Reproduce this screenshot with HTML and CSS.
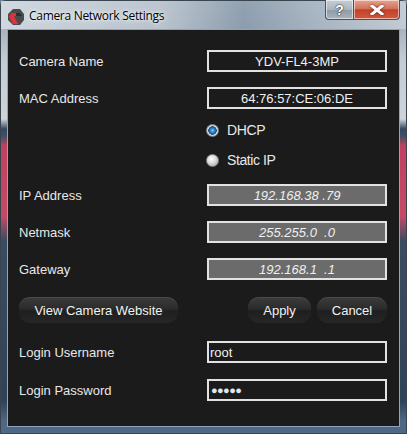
FILE: index.html
```html
<!DOCTYPE html>
<html>
<head>
<meta charset="utf-8">
<link rel="stylesheet" href="styles.css">
</head>
<body>
<div class="window">
  <div class="titlebar">
    <svg class="logo" width="18" height="18" viewBox="0 0 18 18">
      <polygon points="6,1 13,1 17,6 17,12 13,17 6,17 1,12 1,6" fill="#4a4a4a"/>
      <polygon points="4,5 9,5 9,8 7,8 11,16 6,16 2,9" fill="#e0303a"/>
      <polygon points="9,5 13,5 15,8 9,8" fill="#2e2e2e"/>
    </svg>
    <span class="title">Camera Network Settings</span>
    <div class="caption">
      <div class="cap help">?</div>
      <div class="cap close">
        <svg width="14" height="10" viewBox="0 0 14 10"><path d="M2 1 L12 9 M12 1 L2 9" stroke="#fff" stroke-width="3" stroke-linecap="square"/></svg>
      </div>
    </div>
  </div>
  <div class="client">
    <div class="row r-name"><span class="label">Camera Name</span><div class="box">YDV-FL4-3MP</div></div>
    <div class="row r-mac"><span class="label">MAC Address</span><div class="box">64:76:57:CE:06:DE</div></div>
    <div class="row r-dhcp"><span class="radio on"></span><span class="rlabel">DHCP</span></div>
    <div class="row r-static"><span class="radio"></span><span class="rlabel">Static IP</span></div>
    <div class="row r-ip"><span class="label">IP Address</span><div class="box gray">192.168.38 .79</div></div>
    <div class="row r-mask"><span class="label">Netmask</span><div class="box gray">255.255.0 &nbsp;.0</div></div>
    <div class="row r-gw"><span class="label">Gateway</span><div class="box gray">192.168.1 &nbsp;.1</div></div>
    <div class="row r-btns">
      <div class="btn web">View Camera Website</div>
      <div class="spacer"></div>
      <div class="btn apply">Apply</div>
      <div class="btn cancel">Cancel</div>
    </div>
    <div class="row r-user"><span class="label">Login Username</span><div class="box left">root</div></div>
    <div class="row r-pass"><span class="label">Login Password</span><div class="box left dots">●●●●●</div></div>
  </div>
</div>
</body>
</html>
```
FILE: styles.css
```css
* { box-sizing: border-box; }
html, body { margin: 0; padding: 0; }
body { width: 407px; height: 434px; overflow: hidden; background: #6d7f91; }
.window {
  width: 407px; height: 434px;
  border: 1px solid #3b4550;
  border-radius: 6px 6px 0 0;
  background: linear-gradient(180deg, #b9c3cc 0px, #a8b4bf 28px, #c4ccd3 60px, #cdd4da 118px, #33495f 128px, #3f5064 135px, #c0415f 145px, #c44a66 215px, #3a4c62 240px, #2f4358 400px, #4f6885 420px, #4f6885 434px);
  display: flex; flex-direction: column;
  font-family: "Liberation Sans", Arial, sans-serif;
}
.titlebar {
  height: 28px; flex: none;
  display: flex; align-items: flex-start;
  position: relative;
  background: linear-gradient(90deg, rgba(210,218,226,0.9) 0, rgba(190,200,210,0.7) 40%, rgba(120,140,160,0.6) 60%, rgba(160,175,190,0.7) 75%, rgba(200,208,216,0.8) 100%);
}
.logo { margin: 7px 0 0 6px; flex: none; }
.title {
  margin: 7px 0 0 4px;
  font-family: "Open Sans", "Noto Sans", sans-serif;
  font-size: 12px; color: #000; line-height: 16px;
  letter-spacing: -0.3px;
  text-shadow: 0 0 6px rgba(255,255,255,0.9), 0 0 3px rgba(255,255,255,0.9);
}
.caption { position: absolute; right: 6px; top: -1px; display: flex; }
.cap {
  height: 20px; border: 1px solid #4a5158; border-top: none;
  display: flex; align-items: center; justify-content: center;
  box-shadow: inset 0 0 0 1px rgba(255,255,255,0.55);
}
.help {
  width: 28px; border-radius: 0 0 0 4px; border-right: none;
  background: linear-gradient(180deg, #c6ced6 0, #aab5c0 50%, #8e9aa6 51%, #a9b3bd 100%);
  color: #fff; font-weight: bold; font-size: 14px;
  font-family: "Liberation Sans", sans-serif;
  text-shadow: 0 0 2px #333, 0 0 1px #000;
}
.close {
  width: 47px; border-radius: 0 0 4px 0;
  background: linear-gradient(180deg, #e6a491 0, #d2735c 45%, #c2402a 52%, #d05a3e 100%);
}
.close svg { filter: drop-shadow(0 0 1px #5a1a10); }
.client {
  flex: 1;
  margin: 0 6px 6px 6px;
  background: #1b1b1b;
  border: 1px solid #8ea4bc;
  padding: 20px 12px 0 11px;
  display: flex; flex-direction: column;
  color: #e8e8e8;
  font-size: 13px;
}
.row { display: flex; align-items: center; height: 22px; flex: none; }
.label { flex: 1; }
.box {
  width: 180px; height: 22px;
  border: 2px solid #e2e2e2;
  background: #1b1b1b;
  color: #f0f0f0;
  display: flex; align-items: center; justify-content: center;
  font-size: 13px; white-space: pre;
}
.box.gray { background: #6b6b6b; font-style: italic; }
.box.left { justify-content: flex-start; padding-left: 1px; }
.box.dots { font-size: 11px; letter-spacing: -0.6px; color: #dfe6ee; padding-left: 2px; }
.r-mac { margin-top: 15px; }
.r-dhcp { margin-top: 10px; padding-left: 187px; }
.r-static { margin-top: 8px; padding-left: 187px; }
.r-ip { margin-top: 13px; }
.r-mask { margin-top: 15px; }
.r-gw { margin-top: 15px; }
.r-btns { margin-top: 17px; height: 26px; }
.r-user { margin-top: 18px; }
.r-pass { margin-top: 16px; }
.radio {
  width: 13px; height: 13px; border-radius: 50%;
  background: radial-gradient(circle at 40% 35%, #ffffff 0, #d9d9d9 45%, #9a9a9a 100%);
  border: 1px solid #8a8a8a;
  flex: none; position: relative;
}
.radio.on {
  background: radial-gradient(circle, #7fd0ff 0, #1f78c0 2.5px, #14508a 4px, #d8d8d8 4.5px, #bdbdbd 100%);
}
.rlabel { margin-left: 8px; font-size: 14px; letter-spacing: -0.4px; }
.spacer { flex: 1; }
.btn {
  height: 26px; border-radius: 11px;
  background: linear-gradient(180deg, #3c3c3c 0, #2b2b2b 45%, #1f1f1f 55%, #262626 100%);
  box-shadow: inset 0 1px 0 rgba(255,255,255,0.08);
  display: flex; align-items: center; justify-content: center;
  color: #f2f2f2; font-size: 13px;
}
.web { width: 159px; }
.apply { width: 63px; }
.cancel { width: 70px; margin-left: 6px; }
```
